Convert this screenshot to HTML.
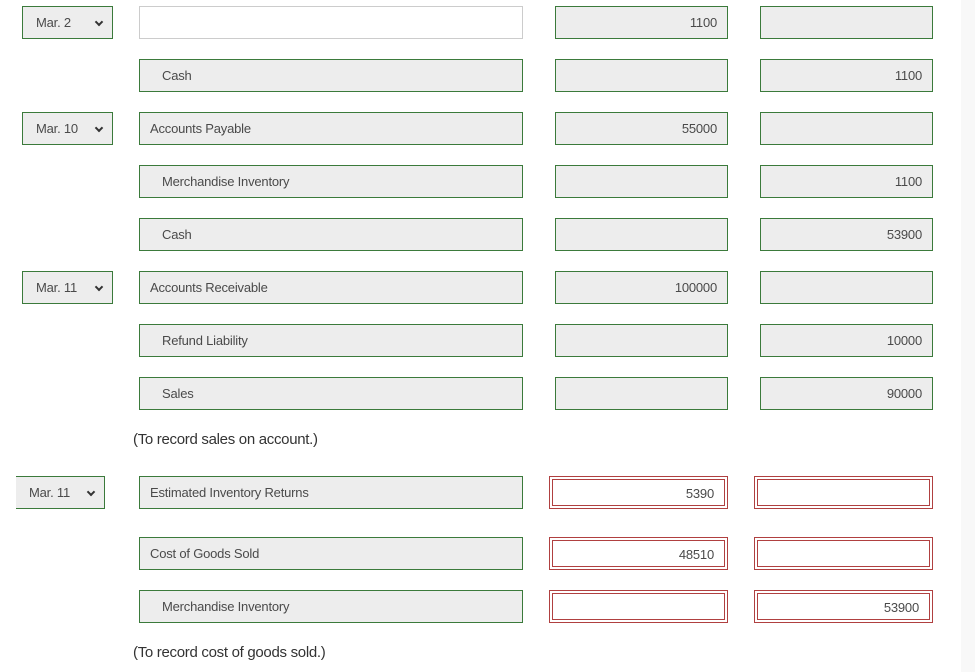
<!DOCTYPE html>
<html><head><style>
body{margin:0;width:975px;height:672px;background:#fff;position:relative;overflow:hidden;font-family:"Liberation Sans",sans-serif;font-size:13px;color:#4a4a4a}
.b{position:absolute;box-sizing:border-box;border:1px solid #3b7a3b;background:#ededed;height:33px;line-height:32px;white-space:nowrap;letter-spacing:-0.2px}
.sel{padding-left:13px}
.sel:after{content:"";position:absolute;right:10px;top:12px;width:4px;height:4px;border-right:2px solid #333;border-bottom:2px solid #333;transform:rotate(45deg)}
.acc{padding-left:10px}
.ind{padding-left:22px}
.num{text-align:right;padding-right:10px}
.r{position:absolute;box-sizing:border-box;border:1px solid #b04040;height:33px;background:#fff}
.r div{position:absolute;left:2px;right:2px;top:2px;bottom:2px;border:1px solid #b04040;text-align:right;padding-right:10px;line-height:28px;letter-spacing:-0.2px}
.t{position:absolute;left:133px;font-size:15px;color:#333;letter-spacing:-0.3px}
</style></head><body>
<div style="position:absolute;left:961px;top:0;width:14px;height:672px;background:#f8f8f8"></div>

<div class="b sel" style="left:22px;top:6px;width:91px">Mar. 2</div>
<div class="b" style="left:139px;top:6px;width:384px;background:#fff;border-color:#ccc"></div>
<div class="b num" style="left:555px;top:6px;width:173px">1100</div>
<div class="b" style="left:760px;top:6px;width:173px"></div>

<div class="b ind" style="left:139px;top:59px;width:384px">Cash</div>
<div class="b" style="left:555px;top:59px;width:173px"></div>
<div class="b num" style="left:760px;top:59px;width:173px">1100</div>

<div class="b sel" style="left:22px;top:112px;width:91px">Mar. 10</div>
<div class="b acc" style="left:139px;top:112px;width:384px">Accounts Payable</div>
<div class="b num" style="left:555px;top:112px;width:173px">55000</div>
<div class="b" style="left:760px;top:112px;width:173px"></div>

<div class="b ind" style="left:139px;top:165px;width:384px">Merchandise Inventory</div>
<div class="b" style="left:555px;top:165px;width:173px"></div>
<div class="b num" style="left:760px;top:165px;width:173px">1100</div>

<div class="b ind" style="left:139px;top:218px;width:384px">Cash</div>
<div class="b" style="left:555px;top:218px;width:173px"></div>
<div class="b num" style="left:760px;top:218px;width:173px">53900</div>

<div class="b sel" style="left:22px;top:271px;width:91px">Mar. 11</div>
<div class="b acc" style="left:139px;top:271px;width:384px">Accounts Receivable</div>
<div class="b num" style="left:555px;top:271px;width:173px">100000</div>
<div class="b" style="left:760px;top:271px;width:173px"></div>

<div class="b ind" style="left:139px;top:324px;width:384px">Refund Liability</div>
<div class="b" style="left:555px;top:324px;width:173px"></div>
<div class="b num" style="left:760px;top:324px;width:173px">10000</div>

<div class="b ind" style="left:139px;top:377px;width:384px">Sales</div>
<div class="b" style="left:555px;top:377px;width:173px"></div>
<div class="b num" style="left:760px;top:377px;width:173px">90000</div>

<div class="t" style="top:431px">(To record sales on account.)</div>

<div class="b sel" style="left:16px;top:476px;width:89px;border-left:none">Mar. 11</div>
<div class="b acc" style="left:139px;top:476px;width:384px">Estimated Inventory Returns</div>
<div class="r" style="left:549px;top:476px;width:179px"><div>5390</div></div>
<div class="r" style="left:754px;top:476px;width:179px"><div></div></div>

<div class="b acc" style="left:139px;top:537px;width:384px">Cost of Goods Sold</div>
<div class="r" style="left:549px;top:537px;width:179px"><div>48510</div></div>
<div class="r" style="left:754px;top:537px;width:179px"><div></div></div>

<div class="b ind" style="left:139px;top:590px;width:384px">Merchandise Inventory</div>
<div class="r" style="left:549px;top:590px;width:179px"><div></div></div>
<div class="r" style="left:754px;top:590px;width:179px"><div>53900</div></div>

<div class="t" style="top:644px">(To record cost of goods sold.)</div>
</body></html>
